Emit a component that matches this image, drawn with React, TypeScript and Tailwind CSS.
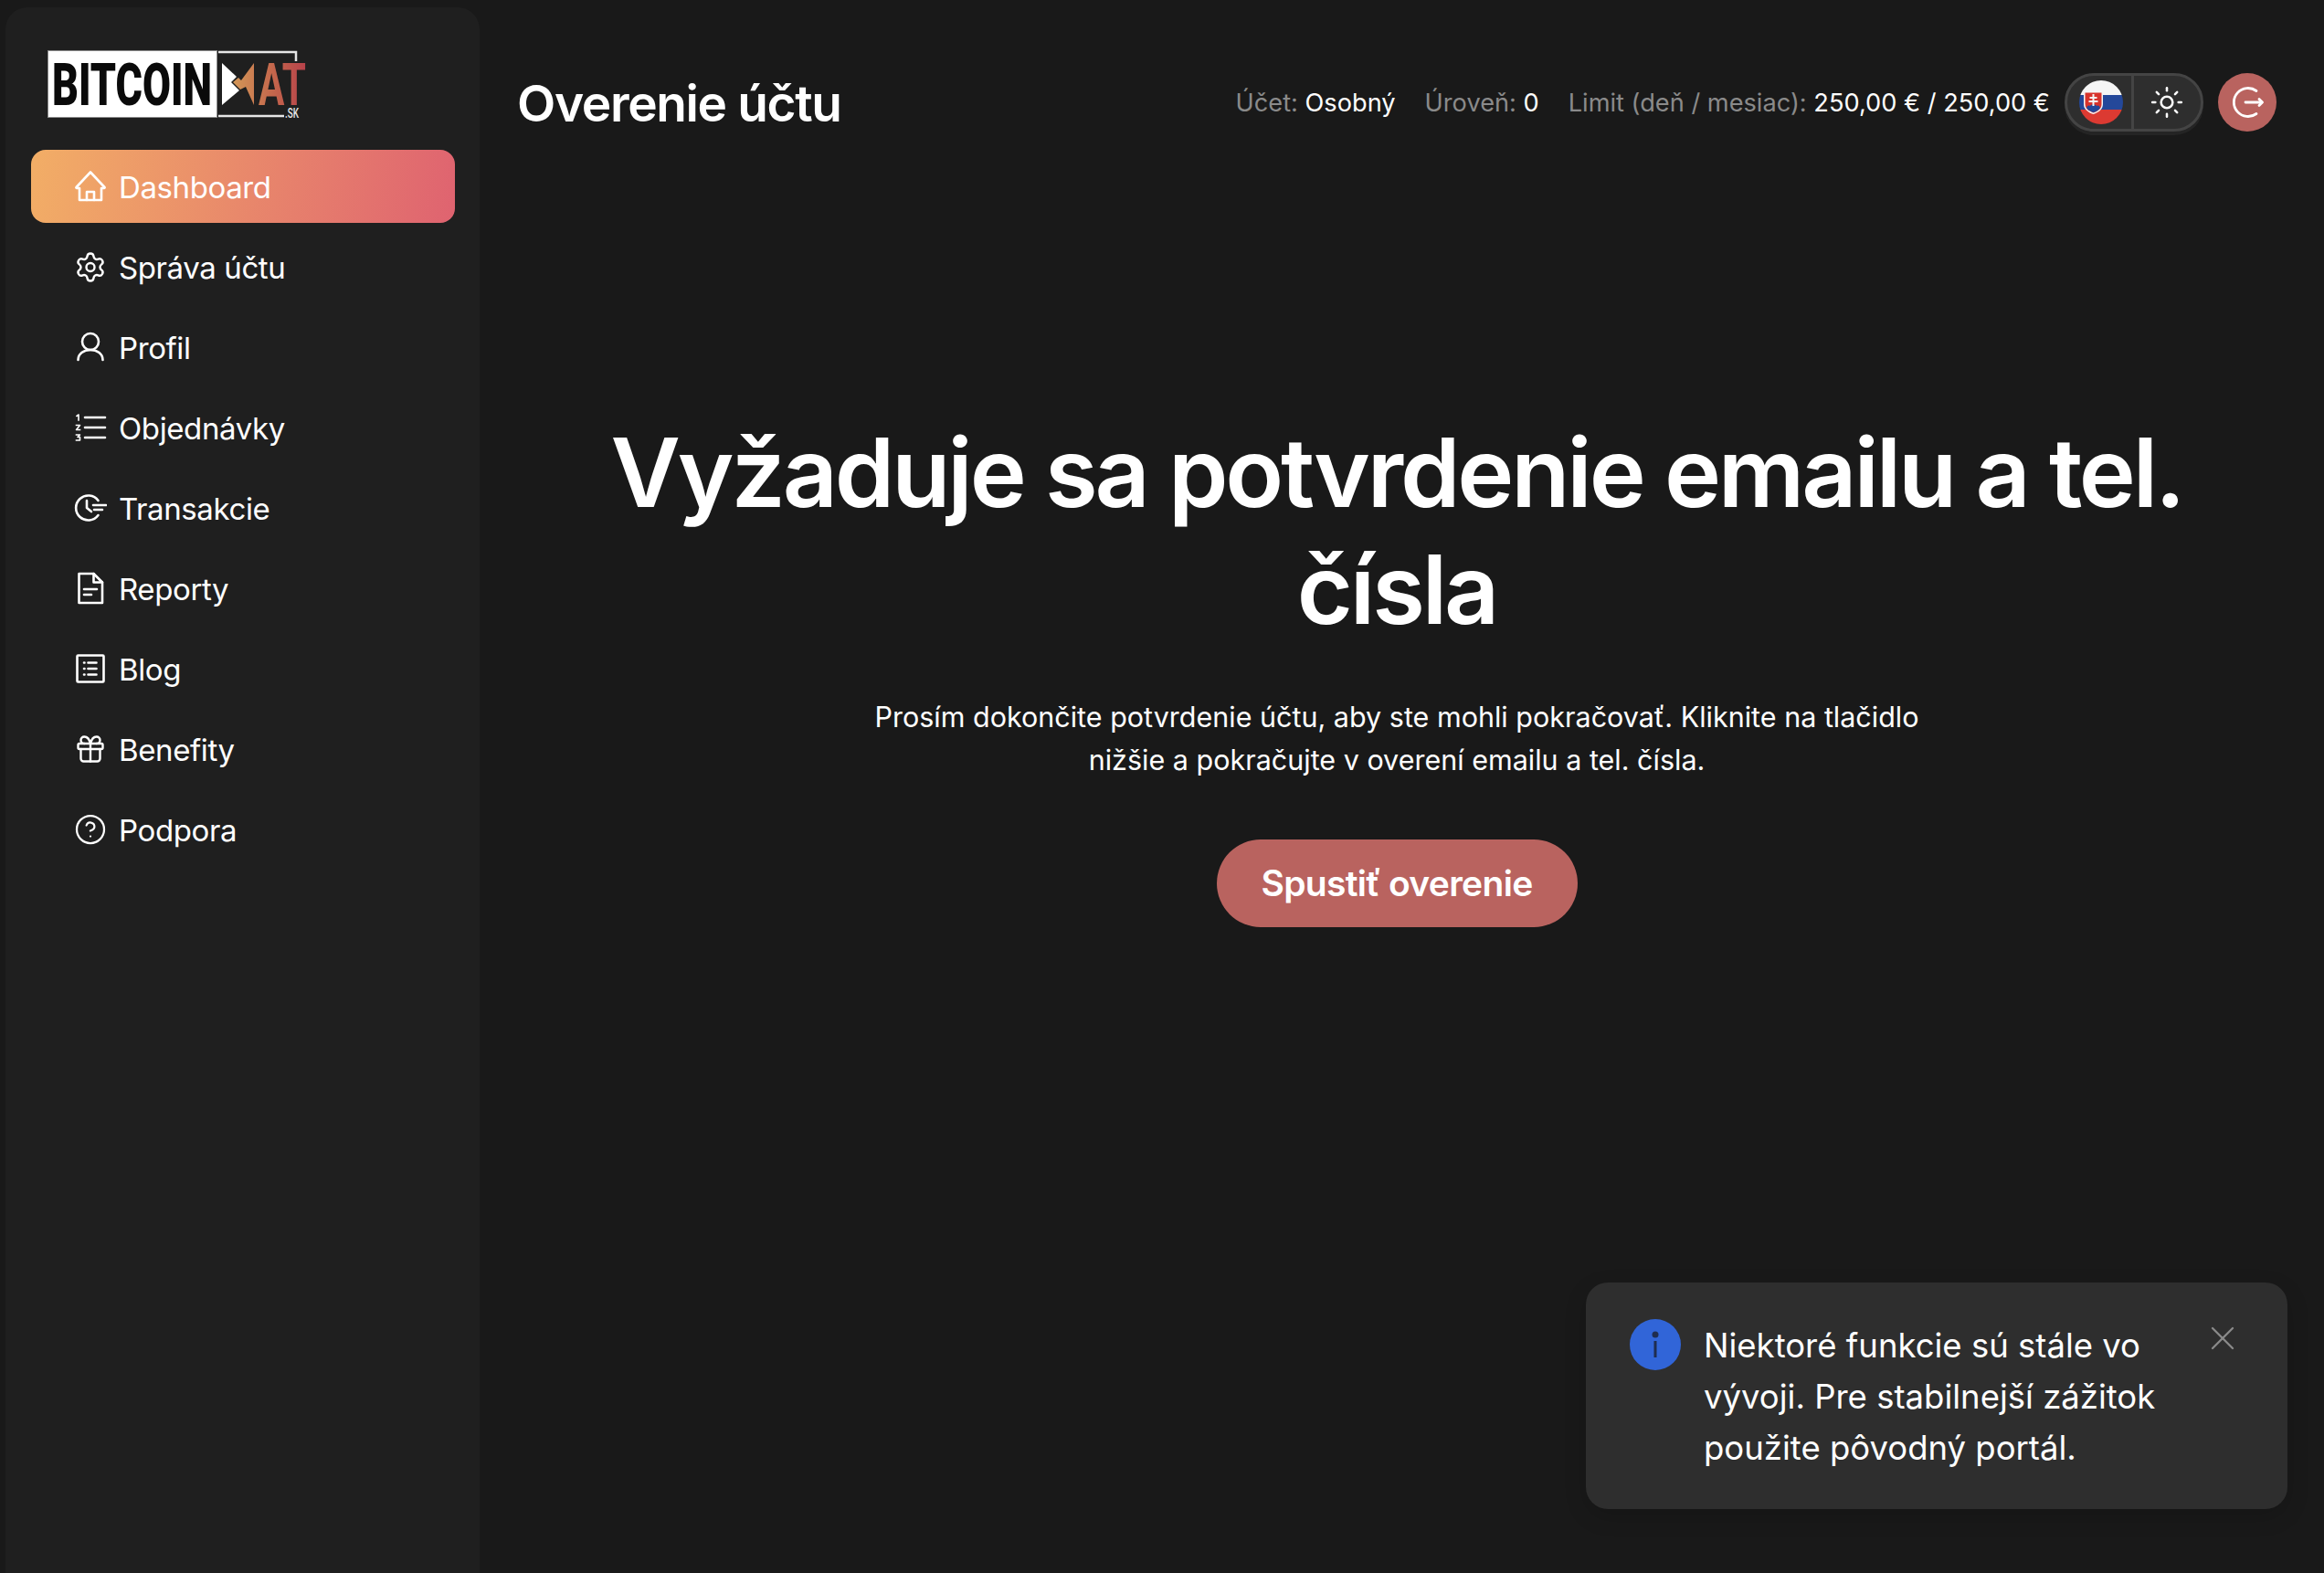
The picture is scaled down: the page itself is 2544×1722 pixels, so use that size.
import React from 'react';
import { Settings, Gift, CircleHelp, Sun, X } from 'lucide-react';

const iconProps = {
  width: 36,
  height: 36,
  viewBox: '0 0 36 36',
  fill: 'none',
  stroke: 'currentColor',
  strokeWidth: 2.6,
  strokeLinecap: 'round' as const,
  strokeLinejoin: 'round' as const,
};

function HomeIcon() {
  return (
    <svg {...iconProps}>
      <path d="M2.500 19 18 2.500 33.500 19a.6.6 0 0 1-.4 1H30v13H6V20H2.900a.6.6 0 0 1-.4-1Z" />
      <path d="M14 33v-9h8v9" />
    </svg>
  );
}

function GearIcon() {
  return <Settings size={39} strokeWidth={1.6} />;
}

function UserIcon() {
  return (
    <svg {...iconProps}>
      <circle cx="18" cy="12" r="9" />
      <path d="M4.500 32c0-6.500 6-11 13.500-11s13.500 4.500 13.500 11" />
    </svg>
  );
}

function OrdersIcon() {
  return (
    <svg {...iconProps}>
      <path d="M12 7h22M12 18h22M12 29h22" />
      <path strokeWidth="1.6" strokeLinecap="square" d="M3 5.500 5 4v6M2.500 15.500H6.500L2.500 20.500H6.500M2.500 26H6.500L4 28.500H6.500V32H2.500" />
    </svg>
  );
}

function HistoryIcon() {
  return (
    <svg {...iconProps}>
      <path d="M26.500 10A13.500 13.500 0 1 0 26.500 26" />
      <path d="M14 10v8l5 4" />
      <path d="M21 15h14M22 20h9" />
    </svg>
  );
}

function ReportIcon() {
  return (
    <svg {...iconProps}>
      <path d="M5.500 2h16L31 11.500V34H5.500Z" />
      <path d="M21.500 2v9.500H31" />
      <path d="M11 19h14M11 25h8" />
    </svg>
  );
}

function BlogIcon() {
  return (
    <svg {...iconProps}>
      <rect x="3.500" y="3.500" width="29" height="29" rx="1" />
      <path d="M15.500 11.500h9M15.500 18h9M15.500 24.500h9" />
      <path d="M11 11.500h.5M11 18h.5M11 24.500h.5" />
    </svg>
  );
}

function GiftIcon() {
  return <Gift size={40} strokeWidth={1.6} />;
}

function HelpIcon() {
  return <CircleHelp size={42} strokeWidth={1.5} />;
}

function Logo() {
  return (
    <svg width="286" height="76" viewBox="0 0 286 76" className="block overflow-visible">
      <defs>
        <linearGradient id="matGrad" gradientUnits="userSpaceOnUse" x1="200" x2="284" y1="0" y2="0">
          <stop offset="0" stopColor="#d49a58" />
          <stop offset="0.55" stopColor="#c4674c" />
          <stop offset="1" stopColor="#b7404a" />
        </linearGradient>
      </defs>
      <rect x="0.500" y="0.500" width="185" height="73" fill="#fff" stroke="#8a8a8a" />
      <text
        x="5"
        y="60"
        textLength="175"
        lengthAdjust="spacingAndGlyphs"
        fontFamily="Roboto, sans-serif"
        fontWeight="900"
        fontSize="65"
        fill="#0a0a0a"
      >
        BITCOIN
      </text>
      <path d="M187 2h85v10M187 72h72" fill="none" stroke="#e6e6e6" strokeWidth="2.500" />
      <path d="M191 14 207 29 201 35 210 44 191 60Z" fill="#fff" />
      <path d="M226 14V60L217 40 211 43 203 35 209 30 212 33Z" fill="url(#matGrad)" />
      <text
        x="231"
        y="60"
        textLength="52"
        lengthAdjust="spacingAndGlyphs"
        fontFamily="Roboto, sans-serif"
        fontWeight="700"
        fontSize="65"
        fill="url(#matGrad)"
      >
        AT
      </text>
      <text
        x="260"
        y="74"
        textLength="15"
        lengthAdjust="spacingAndGlyphs"
        fontFamily="Roboto, sans-serif"
        fontWeight="500"
        fontSize="15"
        fill="#e6e6e6"
      >
        .SK
      </text>
    </svg>
  );
}

function SkFlag() {
  return (
    <svg width="48" height="48" viewBox="0 0 48 48" className="block">
      <defs>
        <clipPath id="flagClip">
          <circle cx="24" cy="24" r="24" />
        </clipPath>
      </defs>
      <g clipPath="url(#flagClip)">
        <rect width="48" height="16" fill="#f5f5f5" />
        <rect y="16" width="48" height="16" fill="#24489a" />
        <rect y="32" width="48" height="16" fill="#dc3a32" />
        <path d="M5 12h21v14c0 6-5 9-10.500 11C10 35 5 32 5 26Z" fill="#f5f5f5" />
        <path d="M6.500 13.500h18V26c0 5-4 7.500-9 9.500-5-2-9-4.500-9-9.500Z" fill="#d8332c" />
        <path d="M8 30c1-3 3-3 4-2 1-2.500 6-2.500 7 0 1-1 3-1 4 2-1.500 2.500-4 4-7.500 5-3.500-1-6-2.500-7.500-5Z" fill="#24489a" />
        <path d="M15.500 15v13M11.500 19h8M10.500 23h10" stroke="#f5f5f5" strokeWidth="2" />
      </g>
    </svg>
  );
}

function LogoutIcon() {
  return (
    <svg width="40" height="40" viewBox="0 0 40 40" fill="none" stroke="currentColor" strokeWidth="2.800" strokeLinecap="round" strokeLinejoin="round">
      <path d="M30 7.500A15.500 15.500 0 1 0 30 32.500" />
      <path d="M18 20h18" />
      <path d="M33 16.500 36.500 20 33 23.500" />
    </svg>
  );
}

const navItems = [
  { label: 'Dashboard', icon: HomeIcon, active: true },
  { label: 'Správa účtu', icon: GearIcon },
  { label: 'Profil', icon: UserIcon },
  { label: 'Objednávky', icon: OrdersIcon },
  { label: 'Transakcie', icon: HistoryIcon },
  { label: 'Reporty', icon: ReportIcon },
  { label: 'Blog', icon: BlogIcon },
  { label: 'Benefity', icon: GiftIcon },
  { label: 'Podpora', icon: HelpIcon },
];

function Sidebar() {
  return (
    <aside className="ml-[6px] mt-2 w-[519px] shrink-0 rounded-t-3xl bg-[#1f1f1f] pt-[47px]">
      <div className="mb-[33px] pl-[46px]">
        <Logo />
      </div>
      <nav className="flex flex-col gap-2 pl-7 pr-[27px]">
        {navItems.map(({ label, icon: Icon, active }) => (
          <a
            key={label}
            className={
              active
                ? 'flex h-20 items-center gap-[13px] rounded-2xl bg-[linear-gradient(100deg,#f2ae66,#df6370)] pl-[47px] text-white'
                : 'flex h-20 items-center gap-[13px] rounded-2xl pl-[47px] text-white'
            }
          >
            <span className="flex h-9 w-9 items-center justify-center">
              <Icon />
            </span>
            <span className="mt-[2px] text-[33px] leading-none tracking-[-0.012em]">{label}</span>
          </a>
        ))}
      </nav>
    </aside>
  );
}

function Header() {
  return (
    <header className="flex h-16 items-center justify-between">
      <h1 className="mt-[2px] text-[55px] font-semibold tracking-[-0.025em] text-white">Overenie účtu</h1>
      <div className="flex items-center">
        <div className="mr-4 mt-[2px] flex items-center gap-8 text-[27.200px] text-[#8a8a8a]">
          <span>
            Účet: <span className="text-white">Osobný</span>
          </span>
          <span>
            Úroveň: <span className="text-white">0</span>
          </span>
          <span>
            Limit (deň / mesiac): <span className="text-white">250,00 € / 250,00 €</span>
          </span>
        </div>
        <div className="flex h-16 w-[152px] rounded-full border-[3px] border-[#444444] bg-[#2e2e2e] text-white shadow-[0_4px_0_#242424]">
          <button className="flex w-[73px] items-center justify-center border-r-[3px] border-[#444444] pl-[3px]">
            <SkFlag />
          </button>
          <button className="flex flex-1 items-center justify-center pr-[1px]">
            <Sun size={38} strokeWidth={1.6} />
          </button>
        </div>
        <button className="ml-4 flex h-16 w-16 items-center justify-center rounded-full bg-[#b9635f] text-white">
          <LogoutIcon />
        </button>
      </div>
    </header>
  );
}

function Toast() {
  return (
    <div className="absolute bottom-[70px] right-10 flex h-[248px] w-[768px] rounded-3xl bg-[#2e2e2e] pl-12 pt-10 shadow-[0_8px_24px_rgba(0,0,0,0.15)]">
      <div className="flex h-14 w-14 shrink-0 items-center justify-center rounded-full bg-[#3165d8]">
        <svg width="8" height="30" viewBox="0 0 8 30" fill="#1f2d4f">
          <circle cx="4" cy="4" r="3.500" />
          <rect x="2.500" y="11" width="3" height="18" />
        </svg>
      </div>
      <p className="ml-[25px] mt-[1px] w-[530px] text-[36.500px] leading-[56px] text-white">
        Niektoré funkcie sú stále vo vývoji. Pre stabilnejší zážitok použite pôvodný portál.
      </p>
      <button className="absolute right-[49px] top-[39px] text-[#8a8a8a]">
        <X size={44} strokeWidth={1.3} />
      </button>
    </div>
  );
}

export default function App() {
  return (
    <div className="relative flex h-[1722px] overflow-hidden bg-[#191919] font-[Inter,sans-serif]">
      <Sidebar />
      <main className="flex flex-1 flex-col items-stretch pl-[41px] pr-[52px] pt-20">
        <Header />
        <section className="mt-[309px] flex flex-col items-center text-center text-white">
          <h2 className="text-[105px] font-semibold leading-[128px] tracking-[-0.03em]">
            Vyžaduje sa potvrdenie emailu a tel. čísla
          </h2>
          <p className="mt-[52px] w-[1170px] text-[30.500px] leading-[47px]">
            Prosím dokončite potvrdenie účtu, aby ste mohli pokračovať. Kliknite na tlačidlo nižšie a pokračujte v overení emailu a tel. čísla.
          </p>
          <button className="mt-16 h-24 rounded-full bg-[#b9635f] px-[49px] text-[39px] font-semibold tracking-[-0.018em] text-white">
            Spustiť overenie
          </button>
        </section>
      </main>
      <Toast />
    </div>
  );
}
